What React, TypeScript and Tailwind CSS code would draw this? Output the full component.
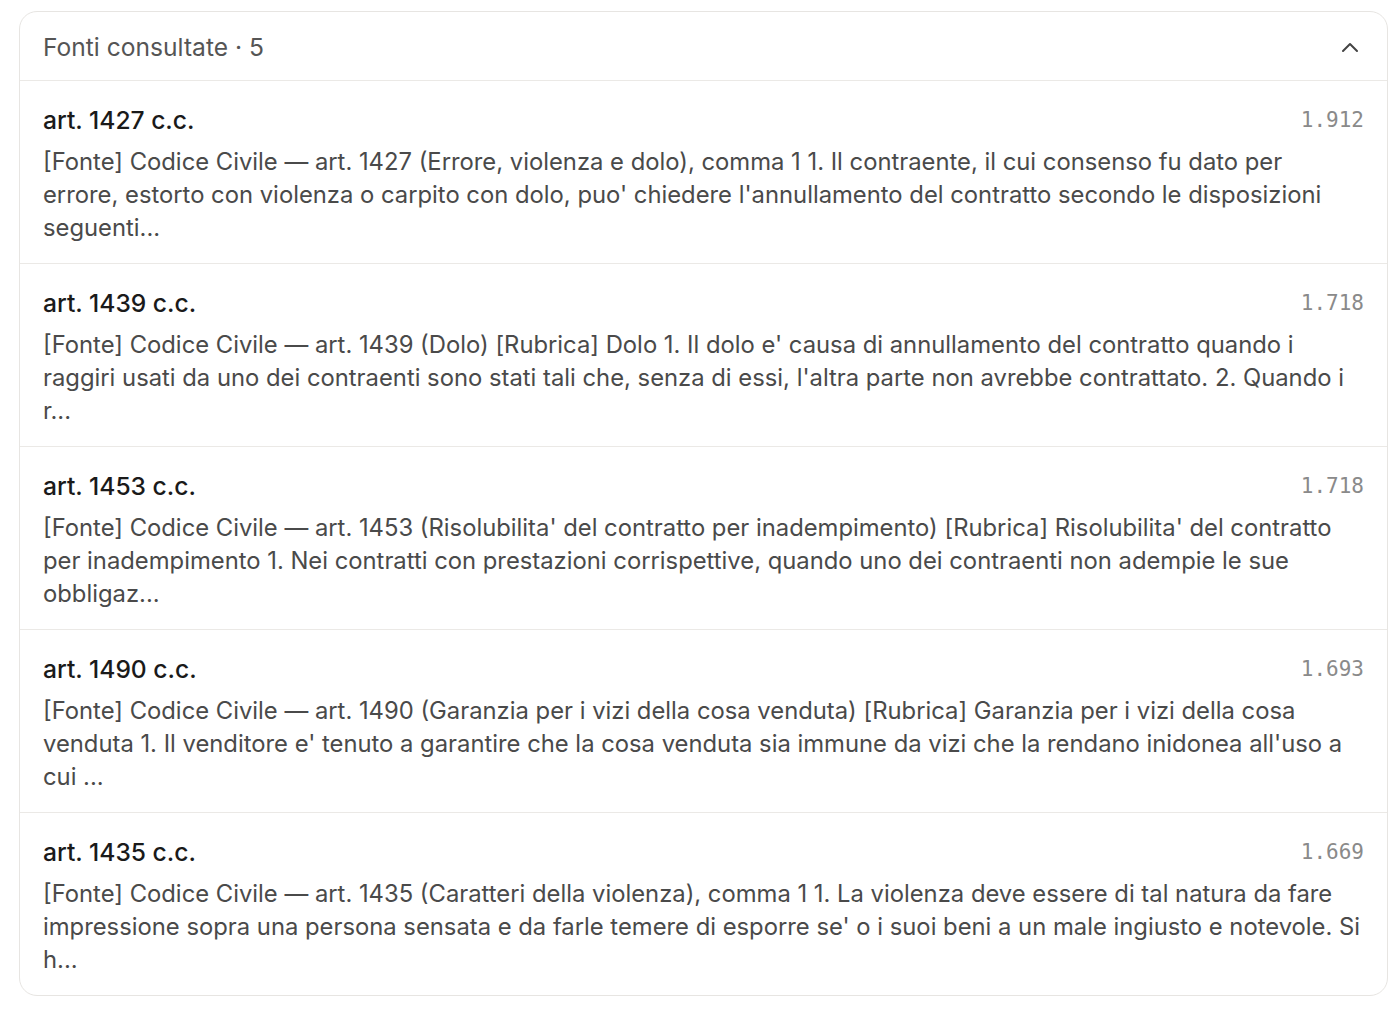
import React from "react";

const items = [
  {
    title: "art. 1427 c.c.",
    score: "1.912",
    text: "[Fonte] Codice Civile — art. 1427 (Errore, violenza e dolo), comma 1 1. Il contraente, il cui consenso fu dato per errore, estorto con violenza o carpito con dolo, puo' chiedere l'annullamento del contratto secondo le disposizioni seguenti...",
  },
  {
    title: "art. 1439 c.c.",
    score: "1.718",
    text: "[Fonte] Codice Civile — art. 1439 (Dolo) [Rubrica] Dolo 1. Il dolo e' causa di annullamento del contratto quando i raggiri usati da uno dei contraenti sono stati tali che, senza di essi, l'altra parte non avrebbe contrattato. 2. Quando i r...",
  },
  {
    title: "art. 1453 c.c.",
    score: "1.718",
    text: "[Fonte] Codice Civile — art. 1453 (Risolubilita' del contratto per inadempimento) [Rubrica] Risolubilita' del contratto per inadempimento 1. Nei contratti con prestazioni corrispettive, quando uno dei contraenti non adempie le sue obbligaz...",
  },
  {
    title: "art. 1490 c.c.",
    score: "1.693",
    text: "[Fonte] Codice Civile — art. 1490 (Garanzia per i vizi della cosa venduta) [Rubrica] Garanzia per i vizi della cosa venduta 1. Il venditore e' tenuto a garantire che la cosa venduta sia immune da vizi che la rendano inidonea all'uso a cui ...",
  },
  {
    title: "art. 1435 c.c.",
    score: "1.669",
    text: "[Fonte] Codice Civile — art. 1435 (Caratteri della violenza), comma 1 1. La violenza deve essere di tal natura da fare impressione sopra una persona sensata e da farle temere di esporre se' o i suoi beni a un male ingiusto e notevole. Si h...",
  },
];

export default function App() {
  return (
    <div
      className="min-h-[1019px] bg-white pl-[19px] pt-[11px]"
      style={{ fontFamily: "Inter, 'Noto Sans', sans-serif" }}
    >
      <div className="w-[1369px] overflow-hidden rounded-[18px] border border-[#e7e5e2] bg-white">
        <div className="flex items-center justify-between border-b border-[#ebe9e6] px-[23px] pt-[17px] pb-[15px]">
          <span className="text-[24.6px] leading-[36px] text-[#555555]">Fonti consultate · 5</span>
          <svg width="18" height="12" viewBox="0 0 18 12" fill="none" className="mr-[5px]">
            <path d="M2 10 L9 3 L16 10" stroke="#444444" strokeWidth="2" strokeLinecap="round" strokeLinejoin="round" />
          </svg>
        </div>
        {items.map((it, i) => (
          <div
            key={i}
            className={`flex flex-col gap-[7px] px-[23px] pt-[21px] pb-[19px] ${i < items.length - 1 ? "border-b border-[#ebe9e6]" : ""}`}
          >
            <div className="flex items-center justify-between">
              <span className="text-[24.6px] leading-[36px] font-medium text-[#1a1a1a]">{it.title}</span>
              <span
                className="text-[21px] leading-[36px] text-[#8a8a8a]"
                style={{ fontFamily: "'DejaVu Sans Mono', monospace" }}
              >
                {it.score}
              </span>
            </div>
            <p className="text-[23.8px] leading-[33px] text-[#4a4a4a]">{it.text}</p>
          </div>
        ))}
      </div>
    </div>
  );
}
